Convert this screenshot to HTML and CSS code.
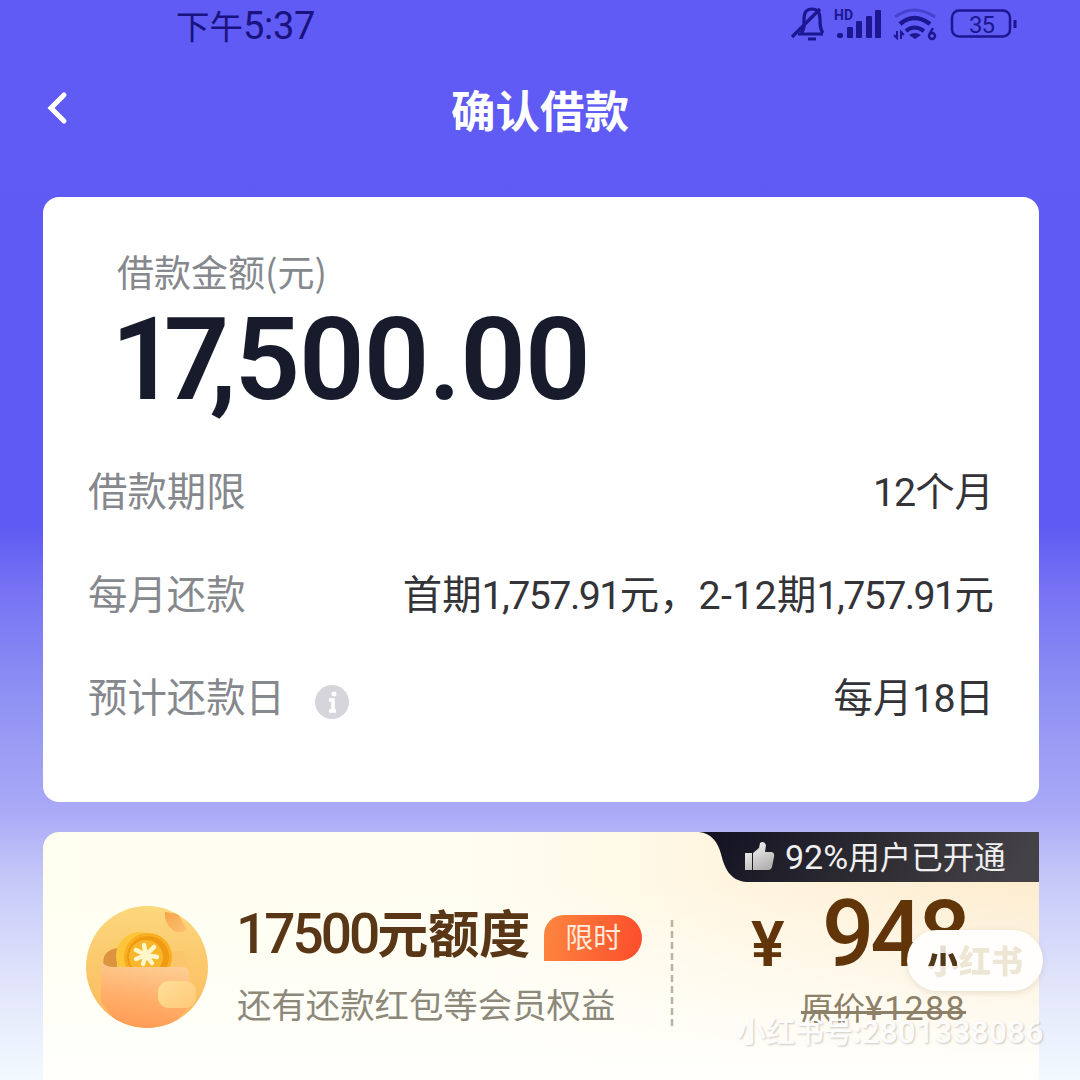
FILE: index.html
```html
<!DOCTYPE html>
<html lang="zh-CN">
<head>
<meta charset="utf-8">
<title>确认借款</title>
<link rel="stylesheet" href="styles.css">
</head>
<body>
<div class="screen">
  <header class="status">
    <div class="time">下午<span class="clock">5:37</span></div>
    <svg class="status-icons" width="230" height="44" viewBox="0 0 230 44" fill="none" stroke="#1c1691">
      <path d="M8 34H33M11 33C15 29 14 25 14 19C14 12 17 9 22 9C27 9 30 12 30 19C30 25 30 29 33 33M18 39H26" stroke-width="3.2"/>
      <path d="M2 37L30 9" stroke-width="3.2"/>
      <text class="hd" x="44" y="20">HD</text>
      <g fill="#1c1691" stroke="none">
        <rect x="47" y="33" width="6" height="5" rx="2"/><rect x="57" y="27" width="6" height="11" rx="1"/><rect x="66" y="21" width="6" height="17" rx="1"/><rect x="76" y="16" width="6" height="22" rx="1"/><rect x="85" y="10" width="6" height="28" rx="1"/>
      </g>
      <path d="M105 17Q124 3 145 17" stroke-width="3" opacity=".35"/>
      <path d="M110 24Q124 12 140 24" stroke-width="4.5"/>
      <path d="M116 31Q124 24 134 31" stroke-width="4"/>
      <path d="M119 35Q125 31 131 35L125 39Z" fill="#1c1691" stroke="none"/>
      <path d="M107 31V38L104 35M111 39V32L114 35" stroke-width="2"/>
      <circle cx="142" cy="36" r="3" stroke-width="2.400"/><path d="M139.500 34L143 28" stroke-width="2.400"/>
      <rect x="162" y="10.500" width="58" height="26" rx="7" stroke-width="2.500"/>
      <path d="M225 20V28" stroke-width="3"/>
      <text class="battery" x="179" y="33">35</text>
    </svg>
  </header>
  <nav class="nav">
    <svg class="back" width="24" height="36" viewBox="0 0 24 36"><path d="M19 5L6 18L19 31" fill="none" stroke="#fff" stroke-width="5" stroke-linecap="round"/></svg>
    <h1>确认借款</h1>
  </nav>
  <main class="content">
    <section class="loan">
      <div class="caption">借款金额(元)</div>
      <div class="amount"><span class="one">1</span><span class="seven">7</span><span class="comma">,</span><span class="rest">500.00</span></div>
      <dl>
        <div class="row"><dt>借款期限</dt><dd><b>12</b>个月</dd></div>
        <div class="row"><dt>每月还款</dt><dd class="plan">首期<b>1,757.91</b>元，<b class="range">2-12</b>期<b>1,757.91</b>元</dd></div>
        <div class="row"><dt>预计还款日<svg class="info" width="34" height="34" viewBox="0 0 34 34"><circle cx="17" cy="17" r="17" fill="#d5d5db"/><circle cx="19" cy="9" r="2.500" fill="#fff"/><path d="M14 15H18V26M14 26H21" fill="none" stroke="#fff" stroke-width="3.500"/></svg></dt><dd>每月<b>18</b>日</dd></div>
      </dl>
    </section>
    <section class="member">
      <svg class="wallet" width="122" height="122" viewBox="0 0 122 122">
        <defs>
          <linearGradient id="disc" x2="0" y2="1"><stop stop-color="#fcd77c"/><stop offset="1" stop-color="#fbb85b"/></linearGradient>
          <linearGradient id="purse" x1=".6" x2=".4" y2="1"><stop stop-color="#fdcf96"/><stop offset=".6" stop-color="#ffad68"/><stop offset="1" stop-color="#ff9c55"/></linearGradient>
          <linearGradient id="flap" x2="1" y2="1"><stop stop-color="#ffdf9a"/><stop offset="1" stop-color="#ffc978"/></linearGradient>
          <linearGradient id="spare" x2="1" y2="1"><stop stop-color="#f5a548"/><stop offset="1" stop-color="#fcc274"/></linearGradient>
          <clipPath id="round"><circle cx="61" cy="61" r="61"/></clipPath>
        </defs>
        <g clip-path="url(#round)">
          <rect width="122" height="122" fill="url(#disc)"/>
          <path d="M79 6Q78 18 88 25Q95 28 101 24L92 8Z" fill="url(#spare)"/>
          <path d="M84 45H96L103 62H80Z" fill="#fbc56e"/>
          <path d="M18 62Q14 45 31 42V62Z" fill="#dc9440"/>
          <circle cx="54" cy="50" r="24" fill="#fdc539"/>
          <circle cx="62" cy="51" r="24" fill="#f9ae22"/>
          <circle cx="62" cy="51" r="21" fill="#f09a12"/>
          <circle cx="60" cy="51" r="17" fill="#f8b62d"/>
          <path d="M60 49L58 39M60 49L50 44M60 49L50 53M60 49L57 58M60 49L66 57M60 49L71 51M60 49L68 41" stroke="#fff7c9" stroke-width="4.500" stroke-linecap="round"/>
          <path d="M15 55Q19 61 28 61H97Q103 61 103 69V100L85 122H35L15 96Z" fill="url(#purse)"/>
          <rect x="72" y="75" width="38" height="27" rx="11" fill="url(#flap)"/>
        </g>
      </svg>
      <div class="benefit">
        <div class="headline"><span class="quota"><b>17500</b>元额度</span><span class="tag">限时</span></div>
        <div class="desc">还有还款红包等会员权益</div>
      </div>
      <svg class="divider" width="4" height="110"><path d="M2 0V110" stroke="#b9b3a6" stroke-width="2.500" stroke-dasharray="7 4"/></svg>
      <div class="price">
        <div class="now"><span class="yen">¥</span><span class="num">948</span></div>
        <div class="old">原价<b>¥1288</b></div>
      </div>
      <div class="ribbon">
        <svg class="ribbon-bg" width="340" height="50" viewBox="0 0 340 50" preserveAspectRatio="none"><defs><linearGradient id="dark" x2="1" y2=".1"><stop stop-color="#111021"/><stop offset=".6" stop-color="#302e33"/><stop offset="1" stop-color="#444246"/></linearGradient></defs><path d="M0 0H340V50H48C30 49 25 34 22 22C19 10 12 1 0 0Z" fill="url(#dark)"/></svg>
        <svg class="thumb" width="30" height="30" viewBox="0 0 30 30"><defs><linearGradient id="silver" x2=".6" y2="1"><stop stop-color="#fff"/><stop offset="1" stop-color="#b4b3b1"/></linearGradient></defs><path d="M0 12H7V29H0ZM8 12L14 7L15 2Q19 -1 21 4L20 11H27Q30 12 29 16L27 26Q26 29 23 29H8Z" fill="url(#silver)"/></svg>
        <span class="ribbon-text"><b>92%</b>用户已开通</span>
      </div>
    </section>
  </main>
  <div class="brand"><span>小红书</span></div>
  <div class="account">小红书号:<b>2801338086</b></div>
</div>
</body>
</html>
```
FILE: styles.css
```css
* { box-sizing: border-box; }
body, h1, dl, dt, dd { margin: 0; }
b { font-weight: inherit; font-family: Roboto, "Noto Sans", sans-serif; }
.screen {
  position: relative; width: 1080px; height: 1080px; overflow: hidden;
  font-family: "Noto Sans CJK SC", sans-serif;
  background: linear-gradient(#5f5bf4 0, #5e5af3 525px, #7773f4 590px, #9092f3 700px, #aaaaf7 812px, #c6c9f8 880px, #e2e5fa 985px, #f2faff 1080px);
}
.status { height: 48px; padding: 0 60px 0 176px; display: flex; justify-content: space-between; color: #19127f; }
.time { font-size: 33.500px; line-height: 49px; font-weight: 400; white-space: nowrap; }
.clock { font-family: Roboto, sans-serif; font-size: 38px; letter-spacing: -.3px; }
.hd { font: 700 14px Roboto, sans-serif; fill: #1c1691; stroke: none; }
.battery { font: 400 24px Roboto, sans-serif; fill: #1c1691; stroke: none; letter-spacing: -1px; }
.nav { height: 149px; padding: 0 45px; display: grid; grid-template-columns: 100px 1fr 100px; align-items: start; }
.back { margin-top: 42px; }
h1 { margin-top: 29px; font-size: 44.500px; line-height: 64px; color: #fff; text-align: center; font-weight: 700; }
.content { padding: 0 41px 0 43px; display: flex; flex-direction: column; gap: 30px; }
.loan { height: 605px; background: #fff; border-radius: 16px; padding: 47px 45px 0 46px; }
.caption { padding-left: 28px; font-size: 37px; line-height: 54px; color: #85888d; }
.amount { height: 120px; padding-left: 22px; font: 600 115px/123px Roboto, sans-serif; color: #181b2c; white-space: nowrap; }
.one { letter-spacing: -13px; }
.seven { letter-spacing: -20px; }
.comma { letter-spacing: -2px; }
.rest { letter-spacing: -1px; }
dl { padding-top: 42px; }
.row { height: 103px; display: flex; justify-content: space-between; align-items: flex-start; font-size: 39.400px; line-height: 58px; white-space: nowrap; }
dt { display: flex; align-items: center; color: #85888d; margin-left: -1px; }
dd { color: #333338; }
dd b { letter-spacing: -1px; }
.plan b { letter-spacing: -1.600px; }
.plan .range { letter-spacing: .3px; }
.info { margin: 14px 0 0 30px; }
.member {
  position: relative; height: 260px; border-radius: 16px 0 0 0; padding: 74px 0 0 43px;
  display: grid; grid-template-columns: 151px 433px 73px 1fr; align-items: start;
  background: linear-gradient(to bottom, transparent 50px, #fffffb 235px), linear-gradient(90deg, #fffff0 0, #fffdf0 45%, #fff5df 70%, #fdeccf);
}
.headline { height: 58px; display: flex; align-items: center; }
.quota { font-size: 51px; font-weight: 600; line-height: 58px; color: #593616; white-space: nowrap; margin: -6px 0 0 -1px; }
.quota b { font-size: 55px; letter-spacing: -3px; font-weight: 500; }
.tag { margin: 5px 0 0 14px; width: 98px; height: 46px; border-radius: 20px 23px 23px 0; background: linear-gradient(100deg, #fd8740, #fc4c2b); color: #ffebdc; font-size: 28px; line-height: 42px; text-align: center; }
.desc { margin-top: 14px; font-size: 34.400px; line-height: 50px; color: #8c887a; white-space: nowrap; }
.divider { margin-top: 14px; }
.price { height: 186px; color: #613509; }
.now { margin-top: -11px; display: flex; align-items: baseline; height: 80px; line-height: 80px; font-family: Roboto, sans-serif; padding-left: 8px; }
.yen { font-size: 63px; font-weight: 600; width: 71px; }
.num { font-size: 92px; font-weight: 500; letter-spacing: -4px; }
.old { position: relative; width: 166px; margin: 7px 0 0 58px; font-size: 32px; line-height: 48px; color: #8d8069; white-space: nowrap; }
.old b { font-size: 34px; letter-spacing: 1.300px; }
.old::after { content: ""; position: absolute; left: 0; top: 29px; width: 165px; height: 3px; background: #8d8069; }
.ribbon { position: absolute; right: 0; top: 0; width: 340px; height: 50px; padding: 0 0 3px 46px; display: flex; align-items: center; gap: 10px; }
.ribbon-bg { position: absolute; left: 0; top: 0; }
.thumb, .ribbon-text { position: relative; }
.ribbon-text { color: #f0eff0; font-size: 31.500px; line-height: 44px; white-space: nowrap; }
.ribbon-text b { font-size: 34px; }
.brand { position: absolute; left: 907px; top: 930px; width: 136px; height: 61px; border-radius: 31px; background: #fffefc; box-shadow: 0 2px 6px #8876502e; text-align: center; }
.brand span { font-size: 32px; line-height: 58px; font-weight: 900; color: transparent; background: linear-gradient(#e5ddd4 0 17px, #503819 17px 30px, #eee6d9 30px) 0 0 / 30px 100% no-repeat, #eee6d4; background-clip: text; -webkit-background-clip: text; }
.account { position: absolute; left: 737px; top: 1008px; font-size: 29px; line-height: 44px; font-weight: 500; color: #fffffff0; text-shadow: 1px 1px 2px #9c949480; white-space: nowrap; }
.account b { font-size: 31px; letter-spacing: .6px; }
```
